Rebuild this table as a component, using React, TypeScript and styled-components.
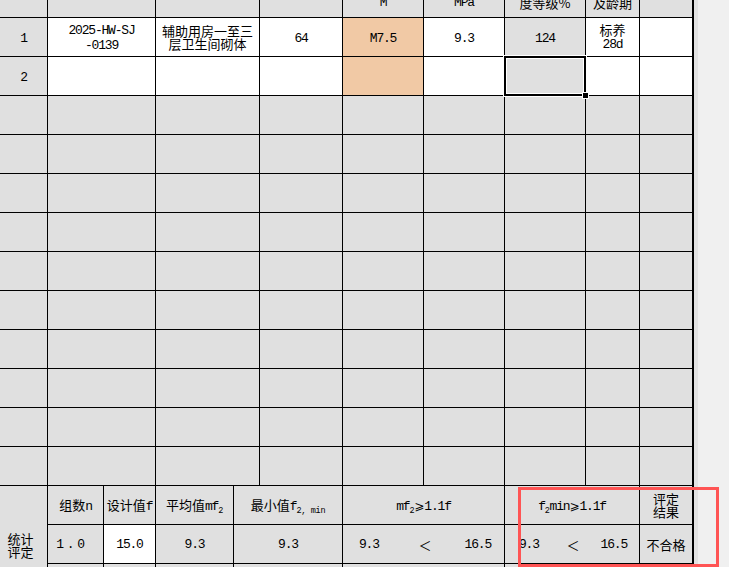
import React from 'react';
import styled, { createGlobalStyle, css } from 'styled-components';

const GlobalStyle = createGlobalStyle`
  html, body { margin: 0; padding: 0; background: #f0f0f0; overflow: hidden; }
  body { font-family: "Noto Sans CJK SC", sans-serif; }
`;

type Bg = 'grey' | 'white' | 'peach';
const BG: Record<Bg, string> = { grey: '#e0e0e0', white: '#ffffff', peach: '#f1c9a5' };

const Page = styled.div`
  position: relative;
  width: 729px;
  height: 567px;
  overflow: hidden;
  display: flex;
  align-items: flex-start;
`;

const Sheet = styled.div`
  width: 692px;
  display: flex;
  flex-direction: column;
  background: #000;
  border-right: 2px solid #000;
`;

const Gutter = styled.div`
  width: 4px;
  height: 567px;
  background: #e2e2e2;
`;

const MainGrid = styled.div`
  display: grid;
  grid-template-columns: 47px 107px 103px 82px 80px 80px 80px 53px 52px;
  grid-template-rows: 17px repeat(12, 38px);
  gap: 1px;
  padding-bottom: 1px;
  background: #000;
`;

const StatsGrid = styled.div`
  display: grid;
  grid-template-columns: 47px 55px 51px 77px 108px 161px 134px 52px;
  grid-template-rows: repeat(3, 38px);
  gap: 1px;
  background: #000;
`;

const Cell = styled.div<{ $bg?: Bg; $selected?: boolean; $span?: number }>`
  position: relative;
  display: flex;
  flex-direction: column;
  align-items: center;
  justify-content: center;
  text-align: center;
  background: ${({ $bg = 'grey' }) => BG[$bg]};
  font-family: "Noto Sans CJK SC", sans-serif;
  font-size: 13px;
  line-height: 13px;
  color: #000;
  white-space: nowrap;
  ${({ $span }) => $span && css`grid-row: span ${$span};`}
  ${({ $selected }) =>
    $selected &&
    css`
      &::after {
        content: '';
        position: absolute;
        inset: -1px;
        border: 2px solid #000;
        box-shadow: inset 0 0 0 1px #fff, 0 0 0 1px #fff;
        pointer-events: none;
        z-index: 1;
      }
      &::before {
        content: '';
        position: absolute;
        right: -4px;
        bottom: -4px;
        width: 5px;
        height: 5px;
        background: #000;
        border: 1px solid #fff;
        z-index: 2;
      }
    `}
`;

const HeadCell = styled(Cell)`
  justify-content: flex-end;
  padding-bottom: 8px;
  overflow: hidden;
`;

const LabelCell = styled(Cell)`
  padding-top: 2px;
  padding-right: 6px;
`;

const Compare = styled(Cell)<{ $pl: number; $pr: number }>`
  display: grid;
  grid-template-columns: 1fr auto 1fr;
  align-items: center;
  padding: 0 ${({ $pr }) => $pr}px 0 ${({ $pl }) => $pl}px;
  & > :first-child { justify-self: start; }
  & > :last-child { justify-self: end; }
`;

const Num = styled.span`
  font-family: "Liberation Mono", monospace;
  letter-spacing: -1.2px;
`;

const Spread = styled(Num)`
  letter-spacing: 2.7px;
  margin-right: 7px;
`;

const Sub = styled.sub`
  font-family: "Liberation Mono", monospace;
  font-size: 8.5px;
  line-height: 0;
  vertical-align: -3px;
  letter-spacing: -0.3px;
`;

const Sym = styled.span`
  font-family: "DejaVu Sans", sans-serif;
  font-size: 12px;
`;

const Lt = styled.span`
  font-family: "Noto Sans CJK SC", sans-serif;
  font-size: 13px;
`;

const Annotation = styled.div`
  position: absolute;
  left: 518px;
  top: 487px;
  width: 201px;
  height: 80px;
  box-sizing: border-box;
  border: 3px solid #ff5454;
  pointer-events: none;
`;

type Line = { t: string; num?: boolean };
type CellData = { lines?: Line[]; bg?: Bg; selected?: boolean };

const L = (t: string, num = false): Line => ({ t, num });

const header = ['', '', '', '', 'M', 'MPa', '度等级%', '及龄期', ''];

const dataRows: CellData[][] = [
  [
    { lines: [L('1', true)] },
    { lines: [L('2025-HW-SJ', true), L('-0139', true)], bg: 'white' },
    { lines: [L('辅助用房一至三'), L('层卫生间砌体')], bg: 'white' },
    { lines: [L('64', true)], bg: 'white' },
    { lines: [L('M7.5', true)], bg: 'peach' },
    { lines: [L('9.3', true)], bg: 'white' },
    { lines: [L('124', true)], bg: 'grey' },
    { lines: [L('标养'), L('28d', true)], bg: 'white' },
    { bg: 'white' },
  ],
  [
    { lines: [L('2', true)] },
    { bg: 'white' },
    { bg: 'white' },
    { bg: 'white' },
    { bg: 'peach' },
    { bg: 'white' },
    { bg: 'grey', selected: true },
    { bg: 'white' },
    { bg: 'white' },
  ],
  ...Array.from({ length: 10 }, () => Array.from({ length: 9 }, () => ({} as CellData))),
];

const renderLines = (lines?: Line[]) =>
  lines?.map((l, i) => (
    <div key={i}>{l.num ? <Num>{l.t}</Num> : l.t}</div>
  ));

export default function App() {
  return (
    <>
      <GlobalStyle />
      <Page>
        <Sheet>
          <MainGrid>
            {header.map((h, i) => (
              <HeadCell key={`h${i}`}>
                {/[A-Za-z]/.test(h) && !/[\u4e00-\u9fff]/.test(h) ? <Num>{h}</Num> : h}
              </HeadCell>
            ))}
            {dataRows.map((row, r) =>
              row.map((c, i) => (
                <Cell key={`${r}-${i}`} $bg={c.bg} $selected={c.selected}>
                  {renderLines(c.lines)}
                </Cell>
              ))
            )}
          </MainGrid>
          <StatsGrid>
            <LabelCell $span={3}>
              <div>统计</div>
              <div>评定</div>
            </LabelCell>
            <Cell>
              <div>组数<Num>n</Num></div>
            </Cell>
            <Cell>
              <div>设计值<Num>f</Num></div>
            </Cell>
            <Cell>
              <div>平均值<Num>mf</Num><Sub>2</Sub></div>
            </Cell>
            <Cell>
              <div>最小值<Num>f</Num><Sub>2, min</Sub></div>
            </Cell>
            <Cell>
              <div><Num>mf</Num><Sub>2</Sub><Sym>⩾</Sym><Num>1.1f</Num></div>
            </Cell>
            <Cell>
              <div><Num>f</Num><Sub>2</Sub><Num>min</Num><Sym>⩾</Sym><Num>1.1f</Num></div>
            </Cell>
            <Cell>
              <div>评定</div>
              <div>结果</div>
            </Cell>

            <Cell>
              <Spread>1.0</Spread>
            </Cell>
            <Cell $bg="white">
              <Num>15.0</Num>
            </Cell>
            <Cell>
              <Num>9.3</Num>
            </Cell>
            <Cell>
              <Num>9.3</Num>
            </Cell>
            <Compare $pl={16} $pr={13}>
              <Num>9.3</Num>
              <Lt>＜</Lt>
              <Num>16.5</Num>
            </Compare>
            <Compare $pl={14} $pr={12}>
              <Num>9.3</Num>
              <Lt>＜</Lt>
              <Num>16.5</Num>
            </Compare>
            <Cell>
              <div>不合格</div>
            </Cell>

            <Cell />
            <Cell />
            <Cell />
            <Cell />
            <Cell />
            <Cell />
            <Cell />
          </StatsGrid>
        </Sheet>
        <Gutter />
        <Annotation />
      </Page>
    </>
  );
}
